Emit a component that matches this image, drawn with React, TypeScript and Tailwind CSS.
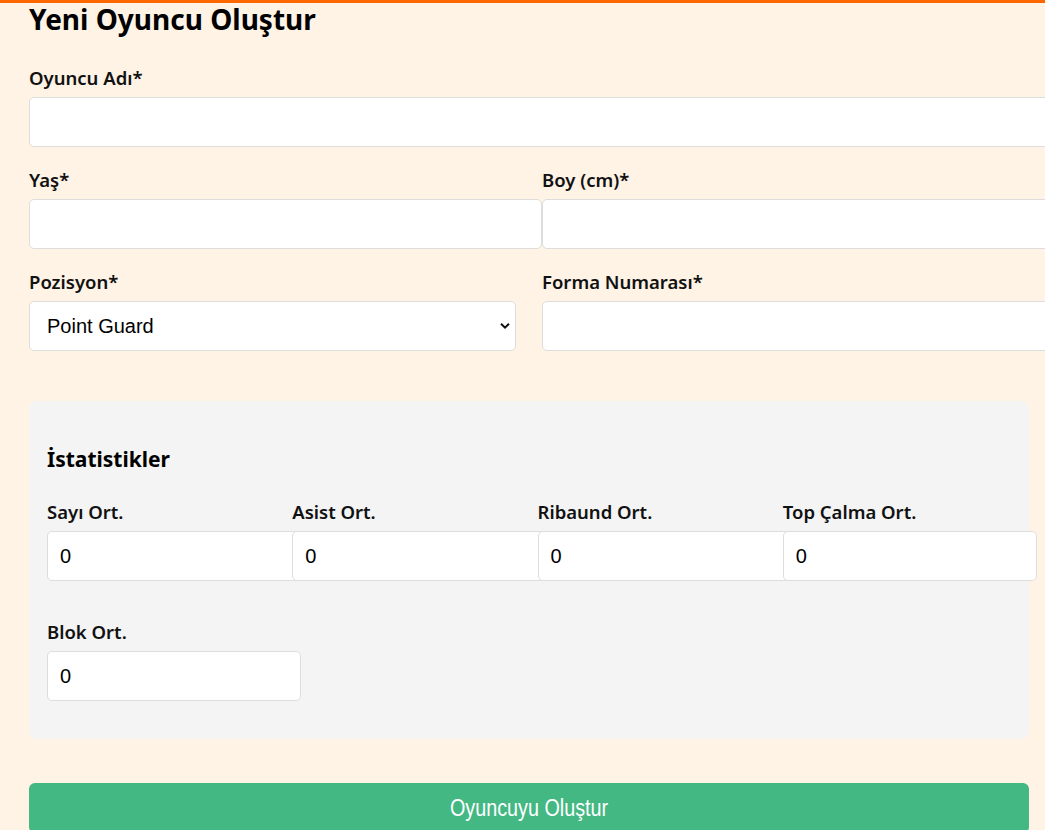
const labelCls =
  "block text-[18.5px] leading-[22px] font-semibold text-[#111] mb-[8px] [font-family:'Noto_Sans',sans-serif]";
const inputCls =
  "box-content block w-full h-[48px] px-[12px] py-0 bg-white border border-[#dddddd] rounded-[5px] text-[20px] text-black outline-none [font-family:'Liberation_Sans',Arial,sans-serif]";

function Field({ label, value = "" }: { label: string; value?: string }) {
  return (
    <div>
      <label className={labelCls}>{label}</label>
      <input className={inputCls} defaultValue={value} />
    </div>
  );
}

export default function App() {
  const stats = ["Sayı Ort.", "Asist Ort.", "Ribaund Ort.", "Top Çalma Ort.", "Blok Ort."];

  return (
    <div className="h-[830px] overflow-hidden bg-[#fff3e6] border-t-[3px] border-[#ff6600]">
      <div className="ml-[29px] w-[1000px]">
        <h1 className="text-[28px] leading-[32px] font-bold text-black mb-[32px] [font-family:'Noto_Sans',sans-serif]">
          Yeni Oyuncu Oluştur
        </h1>

        <form onSubmit={(e) => e.preventDefault()}>
          <div className="mb-[22px]">
            <Field label="Oyuncu Adı*" />
          </div>

          <div className="grid grid-cols-2 gap-x-[26px]">
            <div className="mb-[22px]">
              <Field label="Yaş*" />
            </div>
            <div className="mb-[22px]">
              <Field label="Boy (cm)*" />
            </div>
            <div className="mb-[22px]">
              <label className={labelCls}>Pozisyon*</label>
              <div className="relative">
                <select className="appearance-none block w-full h-[50px] pl-[17px] pr-[36px] bg-white border border-[#dddddd] rounded-[5px] text-[20px] text-black outline-none [font-family:'Liberation_Sans',Arial,sans-serif]">
                  <option>Point Guard</option>
                  <option>Shooting Guard</option>
                  <option>Small Forward</option>
                  <option>Power Forward</option>
                  <option>Center</option>
                </select>
                <svg
                  className="pointer-events-none absolute right-[6px] top-1/2 -translate-y-1/2"
                  width="10"
                  height="7"
                  viewBox="0 0 10 7"
                  fill="none"
                >
                  <path d="M1 1.2 5 5.2 9 1.2" stroke="#111" strokeWidth="2" />
                </svg>
              </div>
            </div>
            <div className="mb-[22px]">
              <Field label="Forma Numarası*" />
            </div>
          </div>

          {/* İstatistikler */}
          <div className="mt-[28px] bg-[#f4f4f4] rounded-[8px] px-[18px] pt-[18px] pb-[38px]">
            <h3 className="mt-[26px] mb-[28px] text-[21px] leading-[28px] font-bold text-black [font-family:'Noto_Sans',sans-serif]">
              İstatistikler
            </h3>
            <div className="grid grid-cols-4 gap-x-[17px] gap-y-[40px]">
              {stats.map((s) => (
                <Field key={s} label={s} value="0" />
              ))}
            </div>
          </div>

          <button
            type="submit"
            className="mt-[44px] block w-full h-[50px] bg-[#43b883] rounded-[6px] text-white text-[23px] [font-family:'Liberation_Sans',Arial,sans-serif]"
          >
            <span className="inline-block scale-x-[0.86]">Oyuncuyu Oluştur</span>
          </button>
        </form>
      </div>
    </div>
  );
}
